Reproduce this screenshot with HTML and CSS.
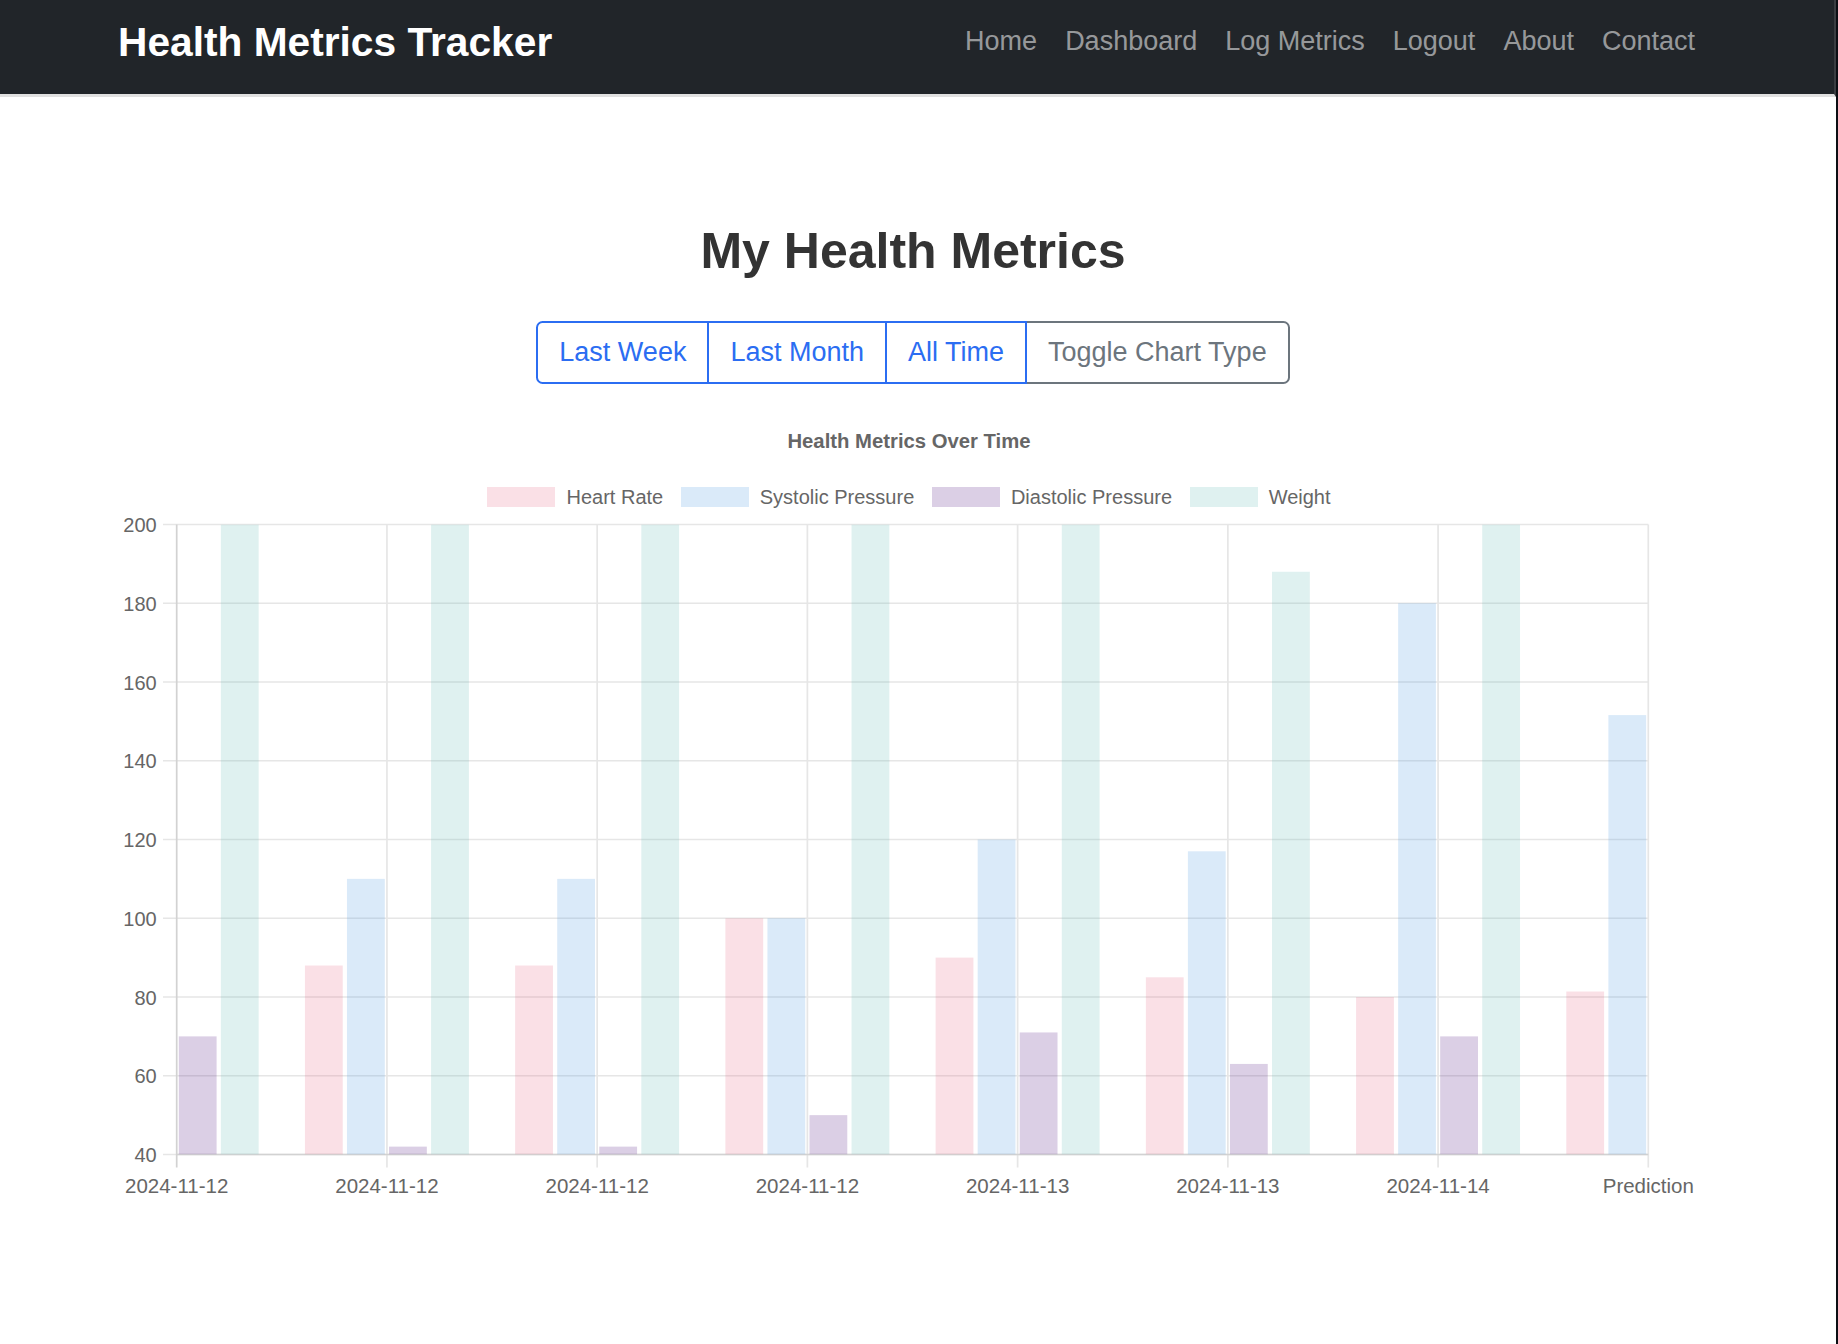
FILE: index.html
```html
<!DOCTYPE html>
<html lang="en">
<head>
<meta charset="utf-8">
<title>Health Metrics Tracker</title>
<link rel="stylesheet" href="styles.css">
</head>
<body>
<nav class="navbar">
  <a class="brand" href="#">Health Metrics Tracker</a>
  <ul class="nav">
    <li><a href="#">Home</a></li>
    <li><a href="#">Dashboard</a></li>
    <li><a href="#">Log Metrics</a></li>
    <li><a href="#">Logout</a></li>
    <li><a href="#">About</a></li>
    <li><a href="#">Contact</a></li>
  </ul>
</nav>
<main class="content">
  <h1 class="page-title">My Health Metrics</h1>
  <div class="btn-group">
    <button class="btn btn-primary">Last Week</button>
    <button class="btn btn-primary">Last Month</button>
    <button class="btn btn-primary">All Time</button>
    <button class="btn btn-secondary">Toggle Chart Type</button>
  </div>
  <section class="chart">
    <div class="chart-title">Health Metrics Over Time</div>
    <div class="legend">
      <div class="legend-item"><span class="swatch sw-hr"></span><span>Heart Rate</span></div>
      <div class="legend-item"><span class="swatch sw-sys"></span><span>Systolic Pressure</span></div>
      <div class="legend-item"><span class="swatch sw-dia"></span><span>Diastolic Pressure</span></div>
      <div class="legend-item"><span class="swatch sw-w"></span><span>Weight</span></div>
    </div>
    <svg class="plot" width="1568" height="700" viewBox="0 0 1568 700" xmlns="http://www.w3.org/2000/svg">
      <defs>
        <clipPath id="area"><rect x="51.7" y="14.5" width="1471.6" height="630"/></clipPath>
      </defs>
      <g class="grid" stroke="#e6e6e6" stroke-width="1.7">
        <line x1="38" y1="14.5" x2="1523.3" y2="14.5"/>
        <line x1="38" y1="93.25" x2="1523.3" y2="93.25"/>
        <line x1="38" y1="172" x2="1523.3" y2="172"/>
        <line x1="38" y1="250.75" x2="1523.3" y2="250.75"/>
        <line x1="38" y1="329.5" x2="1523.3" y2="329.5"/>
        <line x1="38" y1="408.25" x2="1523.3" y2="408.25"/>
        <line x1="38" y1="487" x2="1523.3" y2="487"/>
        <line x1="38" y1="565.75" x2="1523.3" y2="565.75"/>
        <line x1="38" y1="644.5" x2="1523.3" y2="644.5"/>
        <line x1="261.93" y1="14.5" x2="261.93" y2="657.5"/>
        <line x1="472.16" y1="14.5" x2="472.16" y2="657.5"/>
        <line x1="682.39" y1="14.5" x2="682.39" y2="657.5"/>
        <line x1="892.62" y1="14.5" x2="892.62" y2="657.5"/>
        <line x1="1102.85" y1="14.5" x2="1102.85" y2="657.5"/>
        <line x1="1313.08" y1="14.5" x2="1313.08" y2="657.5"/>
        <line x1="1523.3" y1="14.5" x2="1523.3" y2="657.5"/>
      </g>
      <g stroke="#d2d2d2" stroke-width="1.7">
        <line x1="51.7" y1="14.5" x2="51.7" y2="657.5"/>
        <line x1="51.7" y1="644.5" x2="1523.3" y2="644.5"/>
      </g>
      <g clip-path="url(#area)">
        <!-- 2024-11-12 (0) -->
        <rect class="b-dia" x="53.8" y="526.38" width="37.8" height="118.12"/>
        <rect class="b-w" x="95.85" y="14.5" width="37.8" height="630"/>
        <!-- 2024-11-12 (1) -->
        <rect class="b-hr" x="179.93" y="455.5" width="37.8" height="189"/>
        <rect class="b-sys" x="221.98" y="368.88" width="37.8" height="275.62"/>
        <rect class="b-dia" x="264.03" y="636.63" width="37.8" height="7.87"/>
        <rect class="b-w" x="306.08" y="14.5" width="37.8" height="630"/>
        <!-- 2024-11-12 (2) -->
        <rect class="b-hr" x="390.16" y="455.5" width="37.8" height="189"/>
        <rect class="b-sys" x="432.21" y="368.88" width="37.8" height="275.62"/>
        <rect class="b-dia" x="474.26" y="636.63" width="37.8" height="7.87"/>
        <rect class="b-w" x="516.31" y="14.5" width="37.8" height="630"/>
        <!-- 2024-11-12 (3) -->
        <rect class="b-hr" x="600.39" y="408.25" width="37.8" height="236.25"/>
        <rect class="b-sys" x="642.44" y="408.25" width="37.8" height="236.25"/>
        <rect class="b-dia" x="684.49" y="605.13" width="37.8" height="39.37"/>
        <rect class="b-w" x="726.54" y="14.5" width="37.8" height="630"/>
        <!-- 2024-11-13 (4) -->
        <rect class="b-hr" x="810.62" y="447.63" width="37.8" height="196.87"/>
        <rect class="b-sys" x="852.67" y="329.5" width="37.8" height="315"/>
        <rect class="b-dia" x="894.72" y="522.44" width="37.8" height="122.06"/>
        <rect class="b-w" x="936.77" y="14.5" width="37.8" height="630"/>
        <!-- 2024-11-13 (5) -->
        <rect class="b-hr" x="1020.85" y="467.31" width="37.8" height="177.19"/>
        <rect class="b-sys" x="1062.9" y="341.31" width="37.8" height="303.19"/>
        <rect class="b-dia" x="1104.95" y="553.94" width="37.8" height="90.56"/>
        <rect class="b-w" x="1147" y="61.75" width="37.8" height="582.75"/>
        <!-- 2024-11-14 (6) -->
        <rect class="b-hr" x="1231.08" y="487" width="37.8" height="157.5"/>
        <rect class="b-sys" x="1273.13" y="93.25" width="37.8" height="551.25"/>
        <rect class="b-dia" x="1315.18" y="526.38" width="37.8" height="118.12"/>
        <rect class="b-w" x="1357.23" y="14.5" width="37.8" height="630"/>
        <!-- Prediction (7) -->
        <rect class="b-hr" x="1441.31" y="481.5" width="37.8" height="163"/>
        <rect class="b-sys" x="1483.36" y="205.1" width="37.8" height="439.4"/>
      </g>
      <g class="ticks ticks-y" text-anchor="end">
        <text x="31.7" y="22">200</text>
        <text x="31.7" y="100.75">180</text>
        <text x="31.7" y="179.5">160</text>
        <text x="31.7" y="258.25">140</text>
        <text x="31.7" y="337">120</text>
        <text x="31.7" y="415.75">100</text>
        <text x="31.7" y="494.5">80</text>
        <text x="31.7" y="573.25">60</text>
        <text x="31.7" y="652">40</text>
      </g>
      <g class="ticks ticks-x" text-anchor="middle">
        <text x="51.7" y="683.3">2024-11-12</text>
        <text x="261.93" y="683.3">2024-11-12</text>
        <text x="472.16" y="683.3">2024-11-12</text>
        <text x="682.39" y="683.3">2024-11-12</text>
        <text x="892.62" y="683.3">2024-11-13</text>
        <text x="1102.85" y="683.3">2024-11-13</text>
        <text x="1313.08" y="683.3">2024-11-14</text>
        <text x="1523.3" y="683.3">Prediction</text>
      </g>
    </svg>
  </section>
</main>
<div class="window-edge"></div>
</body>
</html>
```
FILE: styles.css
```css
html, body {
  margin: 0;
  padding: 0;
  background: #ffffff;
}

body {
  font-family: "Liberation Sans", Helvetica, Arial, sans-serif;
  min-height: 1344px;
}

.navbar {
  box-sizing: border-box;
  height: 97px;
  margin-right: 2px;
  background: #212529;
  border-bottom: 3px solid #e0e0e0;
  border-right: 2px solid #3a3d41;
  display: flex;
  justify-content: space-between;
  align-items: flex-start;
  padding: 19px 125px 0 118px;
}

.brand {
  color: #ffffff;
  text-decoration: none;
  font-weight: 700;
  font-size: 40.7px;
  line-height: 46px;
}

.nav {
  list-style: none;
  margin: 2px 0 0;
  padding: 0;
  display: flex;
}

.nav a {
  display: block;
  padding: 0 14px;
  font-size: 27px;
  line-height: 40px;
  color: rgba(255, 255, 255, 0.55);
  text-decoration: none;
}

.content {
  width: 1600px;
  margin-left: 113px;
  text-align: center;
}

.page-title {
  margin: 124px 0 0;
  font-size: 50px;
  line-height: 60px;
  font-weight: 700;
  color: #333333;
}

.btn-group {
  display: inline-flex;
  margin-top: 40px;
  vertical-align: top;
}

.btn {
  font-family: inherit;
  font-size: 27px;
  line-height: 39px;
  padding: 10px 21px;
  background: #ffffff;
  border: 2px solid;
  border-radius: 0;
  margin: 0;
  cursor: pointer;
}

.btn + .btn {
  margin-left: -2px;
}

.btn:first-child {
  border-radius: 6.6px 0 0 6.6px;
}

.btn:last-child {
  border-radius: 0 6.6px 6.6px 0;
}

.btn-primary {
  color: #2b6df2;
  border-color: #2b6df2;
  position: relative;
  z-index: 1;
}

.btn-secondary {
  color: #6c757d;
  border-color: #6c757d;
}

.chart {
  width: 1568px;
  margin: 45px 0 0 12px;
}

.chart-title {
  font-size: 20.3px;
  line-height: 24px;
  font-weight: 700;
  color: #666666;
  text-align: center;
}

.legend {
  display: flex;
  justify-content: center;
  gap: 17.6px;
  margin-top: 34px;
  font-size: 20px;
  line-height: 20px;
  color: #666666;
}

.legend-item {
  display: flex;
  align-items: center;
  gap: 11px;
}

.swatch {
  display: block;
  width: 68px;
  height: 20px;
}

.sw-hr, .b-hr { background: rgba(230, 100, 130, 0.2); fill: rgba(230, 100, 130, 0.2); }
.sw-sys, .b-sys { background: rgba(70, 150, 225, 0.2); fill: rgba(70, 150, 225, 0.2); }
.sw-dia, .b-dia { background: rgba(75, 15, 125, 0.2); fill: rgba(75, 15, 125, 0.2); }
.sw-w, .b-w { background: rgba(95, 185, 180, 0.2); fill: rgba(95, 185, 180, 0.2); }

.plot {
  display: block;
  margin-top: 3px;
  overflow: visible;
}

.ticks text {
  font-family: "Liberation Sans", Helvetica, Arial, sans-serif;
  font-size: 20px;
  fill: #666666;
}

.ticks-x text {
  font-size: 20.5px;
}

.window-edge {
  position: fixed;
  top: 0;
  right: 0;
  width: 2px;
  height: 100%;
  background: #0c0e13;
}
```
